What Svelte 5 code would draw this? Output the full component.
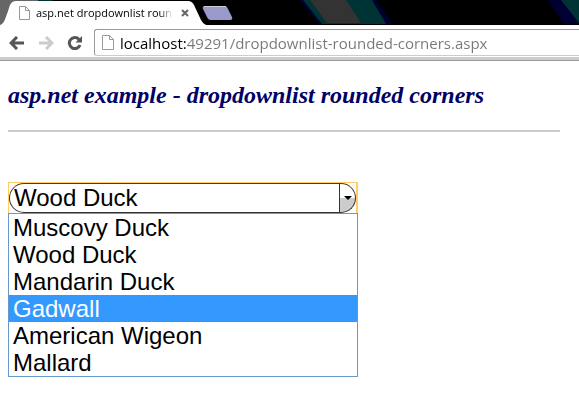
<script lang="ts">
  let url = 'localhost:49291/dropdownlist-rounded-corners.aspx';
  let ducks = ['Muscovy Duck', 'Wood Duck', 'Mandarin Duck', 'Gadwall', 'American Wigeon', 'Mallard'];
  let selected = 'Wood Duck';
  let active = 'Gadwall';
  let expanded = true;

  function toggle(event) {
    event.preventDefault();
    expanded = !expanded;
  }

  function pick(duck) {
    selected = duck;
    active = duck;
    expanded = false;
  }
</script>

<header>
  <div class="tabs">
    <svg class="backdrop" width="579" height="25" viewBox="0 0 579 25" aria-hidden="true">
      <path d="M0 0H38V25H0z" fill="#666" />
      <path d="M38 0H52L54 2H38z" fill="#033" />
      <path d="M300 0H310L326 24H319z" fill="#003" />
      <path d="M303 0H374L390 24H322z" fill="#033" />
      <path d="M310 0H346L361 23H327z" fill="#333" />
      <path d="M372 0H376L392 24H386z" fill="#003" />
      <path d="M548 0H563L579 23V24H564z" fill="#003" />
      <path d="M561 0H579V23z" fill="#033" />
      <path d="M0 25C4 24 5 19 7 14L10 5Q12 1 16 1H188Q192 1 194 5L201 20Q203 24 206 25z" fill="#fff" />
      <path d="M205 6H224Q227 6 228 9L232 17Q233 20 230 20H211Q208 20 207 17L203 9Q202 6 205 6z" fill="#99c" />
      <path d="M204 6.500H226" stroke="#ccc" fill="none" />
    </svg>
    <div class="tab">
      <svg width="11" height="14" viewBox="0 0 11 14" aria-hidden="true">
        <path d="M.5 .5H6.500L10.500 4.500V13.500H.5zM6.500 .5V4.500H10.500" fill="#fff" stroke="#999" />
      </svg>
      <span class="title">asp.net dropdownlist roun</span>
      <button class="close" aria-label="Close tab">
        <svg width="8" height="8" viewBox="0 0 8 8"><path d="M1 1L7 7M7 1L1 7" stroke="#666" stroke-width="2" /></svg>
      </button>
    </div>
  </div>
  <div class="toolbar">
    <button aria-label="Back">
      <svg width="16" height="14" viewBox="0 0 16 14"><path d="M8 1L2 7L8 13M2 7H15" fill="none" stroke="#555" stroke-width="3" /></svg>
    </button>
    <button aria-label="Forward" disabled>
      <svg width="16" height="14" viewBox="0 0 16 14"><path d="M8 1L14 7L8 13M14 7H1" fill="none" stroke="#ccc" stroke-width="3" /></svg>
    </button>
    <button aria-label="Reload">
      <svg width="16" height="14" viewBox="0 0 16 14">
        <path d="M12 3.500A5.500 5.500 0 1 0 13 9" fill="none" stroke="#555" stroke-width="3" />
        <path d="M15 0V6.500H8.500z" fill="#555" />
      </svg>
    </button>
    <div class="address">
      <svg width="12" height="15" viewBox="0 0 12 15" aria-hidden="true">
        <path d="M.5 .5H7.500L11.500 4.500V14.500H.5zM7.500 .5V4.500H11.500" fill="#fff" stroke="#999" />
      </svg>
      <input type="text" aria-label="Address" bind:value={url} />
    </div>
  </div>
</header>

<main>
  <h2>asp.net example - dropdownlist rounded corners</h2>
  <hr />
  <div class="dropdown">
    <div class="focus">
      <select aria-label="Duck" bind:value={selected} on:mousedown={toggle}>
        {#each ducks as duck}
          <option>{duck}</option>
        {/each}
      </select>
      <span class="arrow"></span>
    </div>
    {#if expanded}
      <ul>
        {#each ducks as duck}
          <li>
            <button class:active={duck === active} on:mouseenter={() => (active = duck)} on:click={() => pick(duck)}>{duck}</button>
          </li>
        {/each}
      </ul>
    {/if}
  </div>
</main>

<style>
  :global(body) {
    margin: 0;
    background: #fff;
  }
  button {
    padding: 0;
    border: 0;
    background: none;
  }
  svg {
    display: block;
    flex: none;
  }
  .tabs {
    position: relative;
    height: 25px;
    background: #000;
  }
  .backdrop {
    position: absolute;
    top: 0;
    left: 0;
  }
  .tab {
    position: relative;
    display: flex;
    align-items: center;
    width: 170px;
    height: 25px;
    padding-left: 19px;
  }
  .title {
    flex: 1;
    margin: 0 8px 0 6px;
    white-space: nowrap;
    font: 11px/16px "Open Sans", sans-serif;
    color: #000;
    mask-image: linear-gradient(to right, #000 90%, transparent);
  }
  .toolbar {
    display: flex;
    align-items: center;
    gap: 13px;
    height: 32px;
    padding: 4px 0 0 9px;
    box-sizing: border-box;
    border-bottom: 1px solid #fff;
    box-shadow: 0 3px #ccc, 0 4px #999;
  }
  .address {
    display: flex;
    flex: 1;
    align-items: center;
    gap: 6px;
    min-width: 0;
    height: 27px;
    margin-left: -2px;
    padding-left: 7px;
    box-sizing: border-box;
    border: 1px solid #999;
    border-right: 0;
    border-bottom-color: #ccc;
    border-radius: 3px 0 0 3px;
  }
  .address input {
    flex: 1;
    min-width: 0;
    padding: 0;
    border: 0;
    outline: 0;
    font: 15px/22px "Open Sans", sans-serif;
    /* host part is darker than the path */
    background: linear-gradient(to right, #000 66px, #777 66px);
    background-clip: text;
    -webkit-text-fill-color: transparent;
  }
  main {
    padding: 23px 19px 0 8px;
  }
  h2 {
    margin: 0;
    font: italic bold 24px/30px "Liberation Serif", "Times New Roman", serif;
    color: #006;
  }
  hr {
    height: 2px;
    margin: 20px 0 50px;
    border: 0;
    background: #ccc;
  }
  .dropdown {
    width: 350px;
    max-width: 100%;
    font: 24px/27px "Liberation Sans", Arial, sans-serif;
  }
  .focus {
    position: relative;
    height: 32px;
    box-sizing: border-box;
    border: 1px solid #fc6;
    border-right-width: 2px;
  }
  select {
    appearance: none;
    display: block;
    width: 100%;
    height: 30px;
    padding: 0 24px 2px 4px;
    box-sizing: border-box;
    border: 1px solid #333;
    border-top-color: #630;
    border-radius: 15px;
    outline: 0;
    background: linear-gradient(to right, #333 1px, transparent 1px) right / 16px 100% no-repeat,
      linear-gradient(#fff 50%, #ccc 50%) right / 16px 100% no-repeat #fff;
    font: inherit;
    color: #000;
  }
  .arrow {
    position: absolute;
    top: 13px;
    right: 4px;
    border: 4px solid transparent;
    border-top-color: #000;
    border-bottom: 0;
    pointer-events: none;
  }
  ul {
    position: relative;
    margin: -1px 0 0;
    padding: 0;
    border: 1px solid #69c;
    background: #fff;
    list-style: none;
  }
  li button {
    display: block;
    width: 100%;
    height: 27px;
    padding: 0 4px 2px;
    font: inherit;
    text-align: left;
    color: #000;
  }
  li .active {
    background: #39f;
    color: #fff;
  }
</style>
